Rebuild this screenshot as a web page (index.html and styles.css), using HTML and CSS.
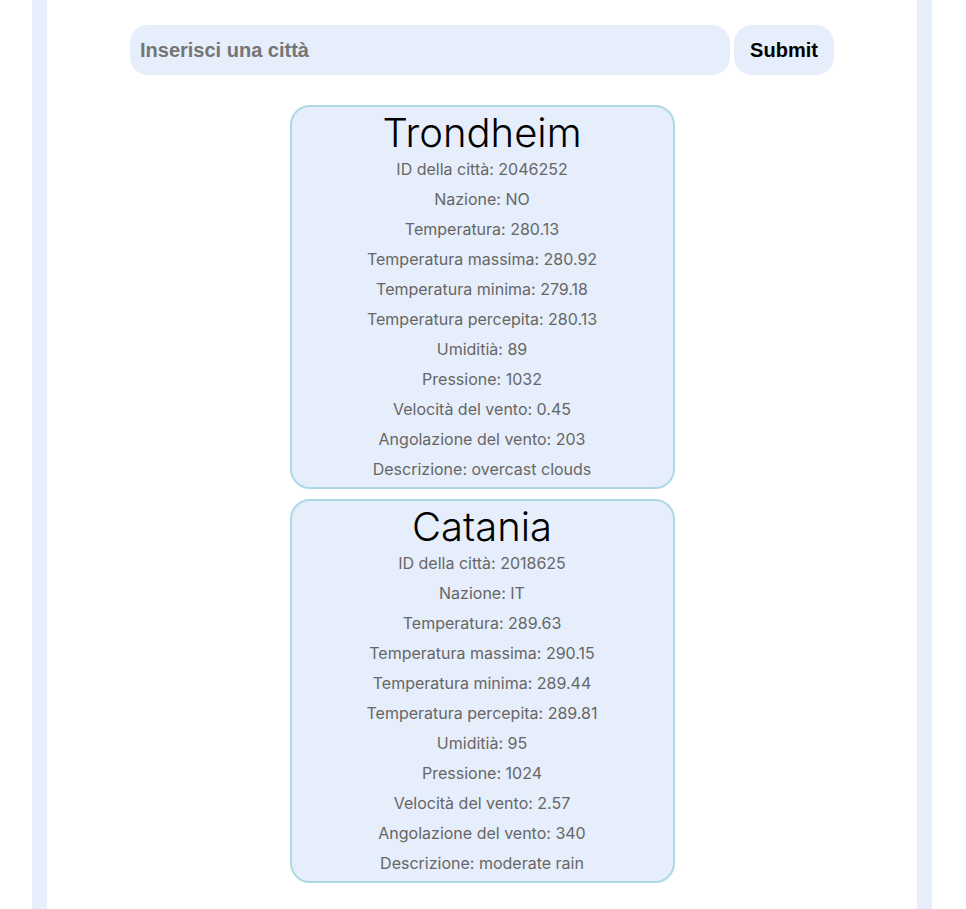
FILE: index.html
```html
<!DOCTYPE html>
<html lang="it">
<head>
<meta charset="utf-8">
<title>Meteo</title>
<link rel="stylesheet" href="styles.css">
</head>
<body>
<div class="page">
  <form class="search">
    <input class="search-input" type="text" placeholder="Inserisci una città">
    <button class="search-btn" type="button">Submit</button>
  </form>
  <div class="cards">
    <div class="card">
      <h2 class="card-title">Trondheim</h2>
      <p class="card-line">ID della città: 2046252</p>
      <p class="card-line">Nazione: NO</p>
      <p class="card-line">Temperatura: 280.13</p>
      <p class="card-line">Temperatura massima: 280.92</p>
      <p class="card-line">Temperatura minima: 279.18</p>
      <p class="card-line">Temperatura percepita: 280.13</p>
      <p class="card-line">Umiditià: 89</p>
      <p class="card-line">Pressione: 1032</p>
      <p class="card-line">Velocità del vento: 0.45</p>
      <p class="card-line">Angolazione del vento: 203</p>
      <p class="card-line">Descrizione: overcast clouds</p>
    </div>
    <div class="card">
      <h2 class="card-title">Catania</h2>
      <p class="card-line">ID della città: 2018625</p>
      <p class="card-line">Nazione: IT</p>
      <p class="card-line">Temperatura: 289.63</p>
      <p class="card-line">Temperatura massima: 290.15</p>
      <p class="card-line">Temperatura minima: 289.44</p>
      <p class="card-line">Temperatura percepita: 289.81</p>
      <p class="card-line">Umiditià: 95</p>
      <p class="card-line">Pressione: 1024</p>
      <p class="card-line">Velocità del vento: 2.57</p>
      <p class="card-line">Angolazione del vento: 340</p>
      <p class="card-line">Descrizione: moderate rain</p>
    </div>
  </div>
</div>
</body>
</html>
```
FILE: styles.css
```css
html, body {
  margin: 0;
  padding: 0;
  background: #ffffff;
}
body {
  font-family: Inter, "Noto Sans", sans-serif;
}
.page {
  width: 870px;
  margin-left: 32px;
  border-left: 15px solid #e6eefb;
  border-right: 15px solid #e6eefb;
  min-height: 909px;
  padding-top: 25px;
  box-sizing: content-box;
}
.search {
  display: flex;
  justify-content: center;
  gap: 4px;
  margin: 0;
}
.search-input {
  width: 600px;
  height: 50px;
  box-sizing: border-box;
  border: none;
  border-radius: 18px;
  background: #e6eefb;
  padding: 0 10px;
  font-family: "Liberation Sans", Arial, sans-serif;
  font-weight: bold;
  font-size: 20px;
  color: #333;
  outline: none;
}
.search-input::placeholder {
  color: #757575;
}
.search-btn {
  width: 100px;
  height: 50px;
  border: none;
  border-radius: 18px;
  background: #e6eefb;
  font-family: "Liberation Sans", Arial, sans-serif;
  font-weight: bold;
  font-size: 20px;
  color: #000;
  padding: 0;
}
.cards {
  display: flex;
  flex-direction: column;
  align-items: center;
  gap: 10px;
  margin-top: 30px;
}
.card {
  width: 385px;
  box-sizing: border-box;
  background: #e6eefb;
  border: 2px solid #add8e6;
  border-radius: 20px;
  text-align: center;
  padding: 0;
}
.card-title {
  margin: 0;
  font-weight: 300;
  font-size: 40px;
  line-height: 52px;
  color: #000;
}
.card-line {
  margin: 10px 0;
  font-size: 16px;
  line-height: 20px;
  color: #666;
}
.card-title + .card-line {
  margin-top: 0;
}
.card-line:last-child {
  margin-bottom: 8px;
}
```
